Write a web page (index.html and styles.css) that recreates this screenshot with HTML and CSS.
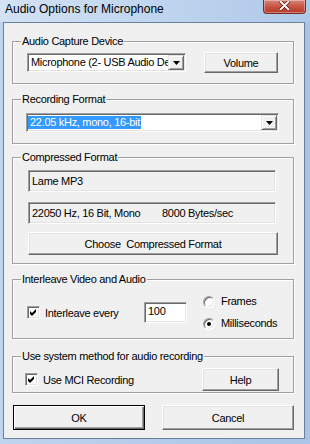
FILE: index.html
```html
<!DOCTYPE html>
<html lang="en">
<head>
  <meta charset="UTF-8">
  <title>Audio Options for Microphone</title>
  <link rel="stylesheet" href="styles.css">
</head>
<body>
  <div class="window">
    <div class="titlebar">
      <span class="title">Audio Options for Microphone</span>
      <div class="close">
        <svg width="11" height="9" viewBox="0 0 11 9">
          <path d="M1.5 0.5 L9.5 8.5 M9.5 0.5 L1.5 8.5" stroke="#5a1a14" stroke-width="3.4" stroke-linecap="round"/>
          <path d="M1.5 0.5 L9.5 8.5 M9.5 0.5 L1.5 8.5" stroke="#fff" stroke-width="1.9" stroke-linecap="round"/>
        </svg>
      </div>
    </div>

    <div class="client">
      <fieldset class="group g-device">
        <legend>Audio Capture Device</legend>
        <div class="body">
          <div class="combo combo-device sunken">
            <span class="combo-text">Microphone (2- USB Audio Device)</span>
            <span class="combo-btn"><svg width="7" height="4" viewBox="0 0 7 4"><path d="M0 0h7L3.5 4z" fill="#000"/></svg></span>
          </div>
          <button class="btn btn-volume">Volume</button>
        </div>
      </fieldset>

      <fieldset class="group g-format">
        <legend>Recording Format</legend>
        <div class="body">
          <div class="combo combo-format sunken">
            <span class="combo-text"><span class="selected">22.05 kHz, mono, 16-bit</span></span>
            <span class="combo-btn"><svg width="7" height="4" viewBox="0 0 7 4"><path d="M0 0h7L3.5 4z" fill="#000"/></svg></span>
          </div>
        </div>
      </fieldset>

      <fieldset class="group g-compressed">
        <legend>Compressed Format</legend>
        <div class="body">
          <div class="static sunken">Lame MP3</div>
          <div class="static sunken"><span class="rate">22050 Hz, 16 Bit, Mono</span><span>8000 Bytes/sec</span></div>
          <button class="btn btn-choose">Choose&nbsp; Compressed Format</button>
        </div>
      </fieldset>

      <fieldset class="group g-interleave">
        <legend>Interleave Video and Audio</legend>
        <div class="body">
          <label class="checkrow interleave">
            <span class="check sunken"><svg width="9" height="9" viewBox="0 0 9 9"><path d="M1 3 L3 5 L7 1 L7 4 L3 8 L1 6 Z" fill="#000"/></svg></span>
            Interleave every
          </label>
          <div class="edit sunken">100</div>
          <div class="radios">
            <label class="radiorow"><span class="radio sunken"></span>Frames</label>
            <label class="radiorow"><span class="radio sunken on"></span>Milliseconds</label>
          </div>
        </div>
      </fieldset>

      <fieldset class="group g-system">
        <legend>Use system method for audio recording</legend>
        <div class="body">
          <label class="checkrow mci">
            <span class="check sunken"><svg width="9" height="9" viewBox="0 0 9 9"><path d="M1 3 L3 5 L7 1 L7 4 L3 8 L1 6 Z" fill="#000"/></svg></span>
            Use MCI Recording
          </label>
          <button class="btn btn-help">Help</button>
        </div>
      </fieldset>

      <div class="actions">
        <button class="btn btn-default">OK</button>
        <button class="btn">Cancel</button>
      </div>
    </div>
  </div>
</body>
</html>
```

FILE: styles.css
```css
body { margin: 0; font-family: "Liberation Sans", Arial, sans-serif; font-size: 11px; letter-spacing: -0.3px; color: #000; }

.window { width: 310px; height: 444px; display: flex; flex-direction: column; background: linear-gradient(to right, #bfd4ee, #a9c4e6); }
.titlebar { height: 22px; flex: none; display: flex; align-items: flex-start; background: linear-gradient(to right, #d3e2f4 0%, #c1d6ef 45%, #afc9e9 100%); }
.title { font-size: 12px; line-height: 15px; letter-spacing: 0; padding: 2px 0 0 5px; }
.close { margin-left: auto; margin-right: 4px; width: 43px; height: 14px; box-sizing: border-box; border: 1px solid #7a2c24; border-top: none; border-radius: 0 0 4px 4px; background: linear-gradient(#d8867a, #c6503f 55%, #b53a2b); box-shadow: inset 0 0 0 1px rgba(255, 255, 255, 0.35); display: flex; justify-content: center; align-items: flex-start; padding-top: 1px; }

.client { flex: 1; margin: 0 5px 5px 3px; border: 1px solid #6d8099; background: #f0f0f0; display: flex; flex-direction: column; }

.sunken { box-sizing: border-box; border: 1px solid; border-color: #a0a0a0 #fff #fff #a0a0a0; box-shadow: inset 1px 1px #696969, inset -1px -1px #e3e3e3; }

.group { margin: 0 10px 0 8px; padding: 0; min-width: 0; border: 1px solid #a0a0a0; box-shadow: inset 1px 1px #fff, 1px 1px #fff; }
.group legend { margin-left: 8px; padding: 0 1px; line-height: 13px; background: #f0f0f0; }
.body { display: flex; align-items: center; }

.g-device { margin-top: 12px; }
.g-device .body { padding: 4px 0 10px 14px; }
.g-format { margin-top: 9px; }
.g-format .body { padding: 7px 0 11px 13px; }
.g-compressed { margin-top: 7px; }
.g-compressed .body { padding: 6px 0 8px 15px; flex-direction: column; align-items: flex-start; }
.g-interleave { margin-top: 9px; }
.g-interleave .body { padding: 9px 0 8px 14px; }
.g-system { margin-top: 11px; }
.g-system .body { padding: 5px 0 1px 12px; }

.btn { box-sizing: border-box; height: 23px; padding: 0; font: inherit; letter-spacing: inherit; color: #000; background: #f0f0f0; border: 1px solid; border-color: #fff #696969 #696969 #fff; box-shadow: inset -1px -1px #a0a0a0, inset 1px 1px #e3e3e3; }
.btn-default { border-color: #000; box-shadow: inset 1px 1px #fff, inset -1px -1px #696969, inset -2px -2px #a0a0a0; }

.combo { height: 19px; padding: 1px; display: flex; background: #fff; }
.combo-text { flex: 1; min-width: 0; overflow: hidden; white-space: nowrap; line-height: 15px; padding-left: 2px; }
.combo-btn { width: 16px; flex: none; box-sizing: border-box; background: #f0f0f0; border: 1px solid; border-color: #e3e3e3 #696969 #696969 #e3e3e3; box-shadow: inset 1px 1px #fff, inset -1px -1px #a0a0a0; display: flex; align-items: center; justify-content: center; }
.combo-device { width: 159px; }
.btn-volume { width: 74px; height: 21px; margin-left: 18px; }
.combo-format { width: 253px; }
.combo-format .combo-text { padding-left: 0; }
.selected { display: inline-block; margin-top: 1px; line-height: 13px; padding: 0 1px 0 2px; background: #3399ff; color: #fff; }

.static { width: 248px; height: 22px; padding: 0 3px; display: flex; align-items: center; white-space: nowrap; }
.static + .static { margin-top: 10px; }
.rate { width: 130px; }
.btn-choose { width: 250px; margin-top: 8px; }

.checkrow { display: flex; align-items: center; gap: 5px; }
.check { width: 13px; height: 13px; padding: 1px; background: #fff; display: flex; align-items: center; justify-content: center; }
.interleave { width: 117px; }
.edit { width: 43px; height: 21px; padding: 2px 3px; line-height: 13px; background: #fff; }
.radios { margin-left: 16px; display: flex; flex-direction: column; gap: 9px; }
.radiorow { display: flex; align-items: center; gap: 6px; line-height: 13px; }
.radio { width: 12px; height: 12px; border-radius: 50%; background: #fff; display: flex; align-items: center; justify-content: center; }
.radio.on::after { content: ""; width: 4px; height: 4px; border-radius: 50%; background: #000; }

.mci { width: 177px; }
.btn-help { width: 77px; }

.actions { display: flex; gap: 17px; margin-top: 12px; padding-left: 9px; }
.actions .btn { width: 132px; height: 25px; }
```
